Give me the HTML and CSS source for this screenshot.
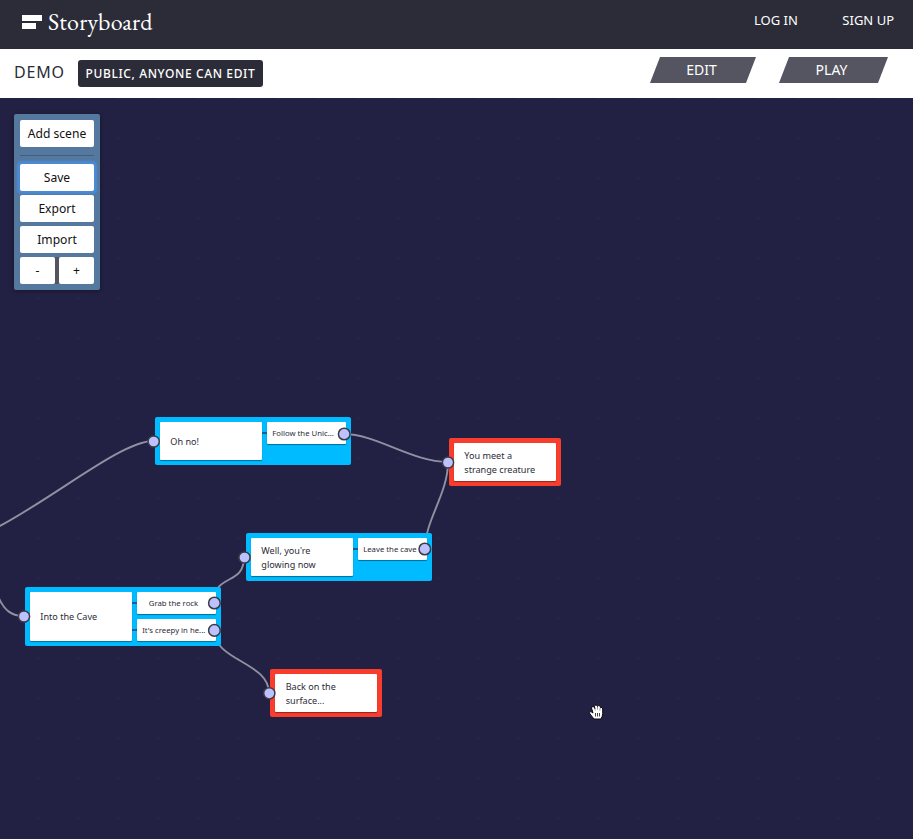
FILE: index.html
```html
<!DOCTYPE html>
<html lang="en">
<head>
<meta charset="utf-8">
<title>Storyboard</title>
<link rel="stylesheet" href="styles.css">
</head>
<body>
<header class="topbar">
  <a class="brand"><svg width="20" height="14" viewBox="0 0 20 14"><path d="M0 0h20v6H0zM0 8h14v6H0z" fill="#fff"/></svg><span class="brand-name">Storyboard</span></a>
  <nav class="account"><a>LOG IN</a><a>SIGN UP</a></nav>
</header>
<section class="storybar">
  <div class="story-info"><h1>DEMO</h1><span class="badge">PUBLIC, ANYONE CAN EDIT</span></div>
  <nav class="modes"><a class="mode edit">EDIT</a><a class="mode play">PLAY</a></nav>
</section>
<main class="canvas">
  <aside class="tools">
    <button>Add scene</button>
    <hr>
    <button class="focused">Save</button>
    <button>Export</button>
    <button>Import</button>
    <div class="zoom"><button>-</button><button>+</button></div>
  </aside>
  <svg class="layer" viewBox="0 98 913 741">
    <g fill="none" stroke="#918fa1" stroke-width="1.9">
      <path d="M-2 527C55 497 122 441 153 441"/>
      <path d="M344 434C376 434 412 462 448 462"/>
      <path d="M425 549C425 520 448 494 448 462"/>
      <path d="M214 603C214 572 244 587 244 557"/>
      <path d="M214 630C214 661 269 662 269 693"/>
      <path d="M-2 596C4 611 12 616 24 616"/>
    </g>
  </svg>
  <article class="node n-ohno"><div class="scene">Oh no!</div><div class="choices"><div class="choice">Follow the Unic...</div></div></article>
  <article class="node end n-creature"><div class="scene">You meet a<br>strange creature</div></article>
  <article class="node n-glow"><div class="scene">Well, you're<br>glowing now</div><div class="choices"><div class="choice">Leave the cave</div></div></article>
  <article class="node n-cave"><div class="scene">Into the Cave</div><div class="choices"><div class="choice centered">Grab the rock</div><div class="choice">It's creepy in he...</div></div></article>
  <article class="node end n-surface"><div class="scene">Back on the<br>surface...</div></article>
  <svg class="layer" viewBox="0 98 913 741">
    <g fill="#bdc2ff" stroke="#3b3b45" stroke-width="1.5">
      <circle cx="153.7" cy="441.5" r="5.6"/><circle cx="448" cy="462.5" r="5.6"/>
      <circle cx="244.5" cy="557.5" r="5.6"/><circle cx="24" cy="616.5" r="5.6"/>
      <circle cx="269.3" cy="693.3" r="5.6"/>
      <circle cx="344.2" cy="434" r="5.8"/><circle cx="424.8" cy="549" r="5.8"/>
      <circle cx="214.4" cy="603" r="5.8"/><circle cx="214.4" cy="630.4" r="5.8"/>
    </g>
    <g transform="translate(589 704.5)">
      <path d="M5 14.5 1 9.5Q-.2 8 .8 7.3T4 8.5L2.5 3.5Q2.5 2 4 2T5.8 4L5.5 1.8Q6 .3 7.2 .6T8.5 2Q9 .8 10.3 1.2T11.4 3Q13.5 2.2 13.7 4.5V9Q13.5 12 12 14.5Z" fill="#fff" stroke="#080810" stroke-width="1"/>
      <path d="m5.7 3 .5 3M8.5 2V5M11.2 3 10.9 6" fill="none" stroke="#333" stroke-width=".5"/>
      <path d="M6.5 8.5v3.5M8.5 8.5v3.5M10.5 8.5v3.5" fill="none" stroke="#111" stroke-width=".8"/>
    </g>
  </svg>
</main>
</body>
</html>
```
FILE: styles.css
```css
* { box-sizing: border-box; }
body {
  margin: 0;
  height: 839px;
  display: flex;
  flex-direction: column;
  overflow: hidden;
  font-family: "Noto Sans", "Open Sans", sans-serif;
  color: #2b2c38;
}
.topbar {
  flex: none;
  height: 49px;
  padding: 0 19px 0 22px;
  display: flex;
  justify-content: space-between;
  background: #2b2c38;
  color: #fff;
}
.brand { display: flex; align-items: flex-start; gap: 6px; padding-top: 8px; }
.brand svg { margin-top: 7px; }
.brand-name { font: 24px/28px "EB Garamond", "Liberation Serif", serif; letter-spacing: .2px; }
.account { display: flex; gap: 44.5px; padding-top: 11px; font-size: 13px; line-height: 18px; }
.storybar {
  flex: none;
  height: 49px;
  padding: 0 25px 0 14px;
  display: flex;
  justify-content: space-between;
  background: #fff;
}
.story-info { display: flex; align-items: center; gap: 13px; }
h1 { width: 51px; margin: 0 0 3px; font-size: 16px; font-weight: 400; letter-spacing: .8px; line-height: 22px; }
.badge {
  width: 185px;
  height: 27px;
  padding-left: 7.5px;
  border-radius: 3px;
  background: #2b2c38;
  color: #fff;
  font-size: 12px;
  font-weight: 500;
  line-height: 27px;
  letter-spacing: .62px;
  white-space: nowrap;
}
.modes { display: flex; gap: 23px; padding-top: 8px; }
.mode {
  height: 26px;
  background: #555562;
  color: #fff;
  font-size: 14px;
  line-height: 26px;
  text-align: center;
  clip-path: polygon(10px 0, 100% 0, calc(100% - 10px) 100%, 0 100%);
}
.edit { width: 106px; padding-right: 3px; }
.play { width: 109px; padding-right: 4px; }
.canvas {
  position: relative;
  flex: 1;
  background: conic-gradient(from 270deg at 1px 1px, #383752 90deg, transparent 0) 38px 0 / 40px 40px, #232143;
}
.tools {
  width: 86px;
  height: 176px;
  margin: 16px 14px;
  padding: 6px;
  display: flex;
  flex-direction: column;
  gap: 4px;
  background: #55789f;
  border-radius: 2px;
  box-shadow: 0 1px 4px #0006;
}
button {
  flex: none;
  height: 27px;
  padding: 0;
  border: 0;
  border-radius: 2px;
  background: #fff;
  color: #111;
  font: 12.1px/27px "Noto Sans", sans-serif;
}
hr { width: 74px; height: 1px; margin: 4px 0; border: 0; background: #425f83; }
.focused { position: relative; box-shadow: 0 0 2px 3px #4b8bd5; }
.focused ~ button, .zoom { position: relative; }
.zoom { display: flex; gap: 4px; background: linear-gradient(#555562, #555562) 35px 0 / 4px 27px no-repeat; }
.zoom button { width: 35px; }
.layer { position: absolute; inset: 0; width: 913px; height: 741px; }
.node {
  position: absolute;
  display: flex;
  gap: 5px;
  padding: 5px;
  border-radius: 2px;
  background: #00bbff;
}
.end { background: #f83d2c; }
.scene {
  flex: none;
  width: 102px;
  padding: 2px 10.3px 0;
  display: flex;
  align-items: center;
  border-radius: 1px;
  background: #fff;
  box-shadow: 0 1px 1px #0006;
  font-size: 9.1px;
  line-height: 14px;
  white-space: nowrap;
}
.choices { flex: 1; display: flex; flex-direction: column; gap: 5px; }
.choice {
  position: relative;
  height: 22px;
  padding-left: 5.2px;
  border-radius: 1px;
  background: #fff;
  box-shadow: 0 1px 1px #0006;
  font-size: 7.75px;
  line-height: 22px;
  white-space: nowrap;
}
.choice::before { content: ""; position: absolute; left: -5px; top: 10px; width: 5px; height: 2px; background: #14608e; }
.centered { padding-left: 11.8px; }
.n-ohno { left: 155px; top: 319.4px; width: 196px; height: 48px; }
.n-creature { left: 449px; top: 340.4px; width: 112px; height: 48px; }
.n-glow { left: 246px; top: 435.4px; width: 186px; height: 48px; }
.n-cave { left: 25px; top: 488.5px; width: 196px; height: 59.5px; }
.n-surface { left: 270.4px; top: 571.4px; width: 112px; height: 48px; }
```
